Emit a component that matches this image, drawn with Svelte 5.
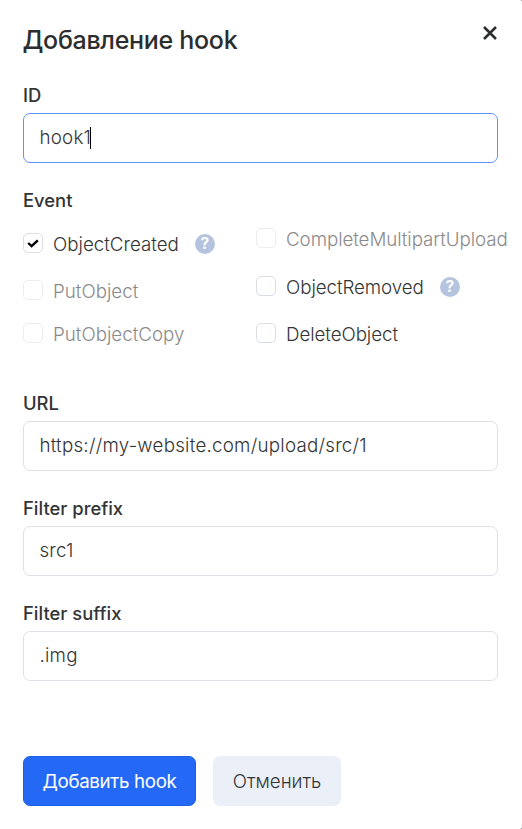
<script>
  const columns = [
    [
      { name: 'ObjectCreated', checked: true, help: true, top: 33 },
      { name: 'PutObject', disabled: true, top: 80 },
      { name: 'PutObjectCopy', disabled: true, top: 123 }
    ],
    [
      { name: 'CompleteMultipartUpload', disabled: true, top: 28 },
      { name: 'ObjectRemoved', help: true, top: 76 },
      { name: 'DeleteObject', top: 123 }
    ]
  ];
  // Space above an option, measured from the end of the one before it
  const gap = (col, i) => col[i].top - (i ? col[i - 1].top + 20 : 12);
</script>

{#snippet field(label, value, focused)}
  <section class="field">
    <div class="label">{label}</div>
    <div class="input" class:focused>
      <span>{value}</span>{#if focused}<i class="caret"></i>{/if}
    </div>
  </section>
{/snippet}

<div class="backdrop">
  <main class="modal">
    <header>
      <h1>Добавление hook</h1>
      <button class="close" aria-label="Закрыть">
        <svg width="16" height="16" viewBox="0 0 16 16"><path d="M2 2 14 14M14 2 2 14" /></svg>
      </button>
    </header>

    {@render field('ID', 'hook1', true)}

    <section class="events">
      <div class="label">Event</div>
      <div class="columns">
        {#each columns as col}
          <div class="column">
            {#each col as option, i}
              <div class="option" class:disabled={option.disabled} style:margin-top="{gap(col, i)}px">
                <span class="box">
                  {#if option.checked}
                    <svg width="12" height="9" viewBox="0 0 12 9"><path d="M1.2 4 4.6 7.2 10.8 1.3" /></svg>
                  {/if}
                </span>
                <span class="name">{option.name}</span>
                {#if option.help}<span class="help">?</span>{/if}
              </div>
            {/each}
          </div>
        {/each}
      </div>
    </section>

    {@render field('URL', 'https://my-website.com/upload/src/1', false)}
    {@render field('Filter prefix', 'src1', false)}
    {@render field('Filter suffix', '.img', false)}

    <footer>
      <button class="primary">Добавить hook</button>
      <button class="secondary">Отменить</button>
    </footer>
  </main>
</div>

<style>
  :global(body) { margin: 0; }
  .backdrop { background: #858585; height: 829px; overflow: hidden; }
  .modal {
    box-sizing: border-box;
    height: 829px;
    padding: 0 24px 0 23px;
    background: #fff;
    border-radius: 0 2px 2px 0;
    color: #333435;
    font: 300 18.75px/24px Inter, "Liberation Sans", sans-serif;
  }
  header { display: flex; justify-content: space-between; height: 83px; }
  h1 { margin: 24px 0 0 -0.5px; font-size: 25px; line-height: 32px; font-weight: 500; letter-spacing: -0.3px; white-space: nowrap; color: #2c2d2e; }
  button { font: inherit; border: 0; padding: 0; margin: 0; color: inherit; white-space: nowrap; }
  .close { width: 16px; height: 16px; margin-top: 25px; background: none; display: grid; place-items: center; }
  .close svg { fill: none; stroke: #2c2d2e; stroke-width: 2.6; }
  .label { height: 24px; font-weight: 500; font-size: 18.4px; }
  .field { height: 105px; }
  .input {
    box-sizing: border-box;
    height: 50px;
    margin-top: 6px;
    padding: 0 15px 0 15.4px;
    border: 1px solid #dfe0e5;
    border-radius: 7px;
    display: flex;
    align-items: center;
    letter-spacing: 0.24px;
  }
  .input.focused { border-color: #5c94fb; }
  .caret { width: 1px; height: 22px; background: #000; margin-left: -0.7px; }
  .events { height: 203px; }
  .columns { display: flex; }
  .column { width: 233px; flex: none; }
  .option { display: flex; align-items: center; height: 20px; white-space: nowrap; }
  .box {
    box-sizing: border-box;
    width: 20px;
    height: 20px;
    flex: none;
    border: 1px solid #dadce6;
    border-radius: 5px;
    display: grid;
    place-items: center;
  }
  .box svg { fill: none; stroke: #000; stroke-width: 2.4; }
  .name { margin: 4px 0 0 10px; }
  .column + .column .name { letter-spacing: -0.07px; }
  .disabled .box { border-color: #ececf2; }
  .disabled .name { color: #8a8a8b; }
  .help {
    width: 20px;
    height: 20px;
    margin: 2px 0 0 16px;
    border-radius: 50%;
    background: #b4c4df;
    color: #fff;
    font-size: 15.5px;
    line-height: 20px;
    font-weight: 700;
    text-align: center;
  }
  footer { display: flex; gap: 17px; margin-top: 50px; }
  footer button { height: 50px; border-radius: 7px; box-sizing: border-box; padding-top: 1px; }
  .primary { width: 173px; background: #2469f5; border: 1px solid #1d5fdf; color: #fff; font-weight: 400; letter-spacing: -0.35px; }
  .secondary { width: 128px; background: #ebf0f8; }
</style>
